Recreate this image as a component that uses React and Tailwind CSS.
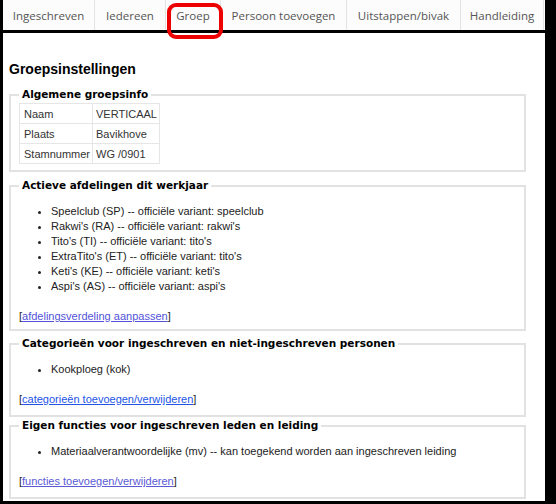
import { Fragment } from "react"

const TABS = [
    ["Ingeschreven", "w-[91px]"],
    ["Iedereen", "w-[70px]"],
    ["Groep", "w-[54px]"],
    ["Persoon toevoegen", "w-[125px]"],
    ["Uitstappen/bivak", "w-[113px]"],
    ["Handleiding", "w-[82px]"],
]

const INFO = [
    ["Naam", "VERTICAAL"],
    ["Plaats", "Bavikhove"],
    ["Stamnummer", "WG /0901"],
]

const AFDELINGEN = [
    "Speelclub (SP) -- officiële variant: speelclub",
    "Rakwi's (RA) -- officiële variant: rakwi's",
    "Tito's (TI) -- officiële variant: tito's",
    "ExtraTito's (ET) -- officiële variant: tito's",
    "Keti's (KE) -- officiële variant: keti's",
    "Aspi's (AS) -- officiële variant: aspi's",
]

function Box({ title, children, className = "" }) {
    return (
        <fieldset className={`border-2 border-[#e2e2e2] px-[8px] ${className}`}>
            <legend className="px-[3px] font-['DejaVu_Sans',sans-serif] font-bold text-[10.5px] leading-[13px] text-black">{title}</legend>
            {children}
        </fieldset>
    )
}

function EditLink({ label, color }) {
    return (
        <p className="leading-[14px]">
            [<a href="#" className={`underline ${color}`}>{label}</a>]
        </p>
    )
}

function Items({ items }) {
    return (
        <ul className="list-disc pl-[32px] mt-[12px] mb-[15px]">
            {items.map((item) => (
                <li key={item} className="leading-[15px]">{item}</li>
            ))}
        </ul>
    )
}

export default function App() {
    return (
        <div className="w-[556px] h-[504px] bg-black overflow-hidden">
            <div className="relative ml-[3px] w-[542px] h-[501px] bg-white">
                {/* tab bar */}
                <nav className="flex h-[33px] bg-[#fcfcfc] border-b-[3px] border-black font-['Open_Sans',sans-serif] text-[11.5px] text-[#555] whitespace-nowrap">
                    {TABS.map(([tab, w]) => (
                        <Fragment key={tab}>
                            <span className={`flex items-center justify-center pt-[1px] ${w}`}>{tab}</span>
                            <span className="w-px self-stretch bg-[#e3e3e3]"></span>
                        </Fragment>
                    ))}
                </nav>

                {/* highlight around the active tab */}
                <div className="absolute left-[164px] top-[3px] w-[56px] h-[36px] rounded-[9px] border-[4px] border-[#ee0000]"></div>

                <main className="pl-[6px] pr-[19px] font-['Liberation_Sans',sans-serif] text-[11px] text-[#222]">
                    <h1 className="mt-[28px] mb-[11px] text-[14px] leading-[16px] font-bold text-black">Groepsinstellingen</h1>

                    <Box title="Algemene groepsinfo" className="pb-[6px]">
                        <table className="mt-[2px] border-collapse text-[#333]">
                            <tbody>
                                {INFO.map(([k, v]) => (
                                    <tr key={k}>
                                        <td className="border border-[#e6e6e6] pl-[4px] pr-[2px] h-[20px] leading-[14px]">{k}</td>
                                        <td className="border border-[#e6e6e6] pl-[3px] pr-[2px] h-[20px] leading-[14px]">{v}</td>
                                    </tr>
                                ))}
                            </tbody>
                        </table>
                    </Box>

                    <Box title="Actieve afdelingen dit werkjaar" className="mt-[7px] pb-[6px]">
                        <Items items={AFDELINGEN} />
                        <EditLink label="afdelingsverdeling aanpassen" color="text-[#5252d8]" />
                    </Box>

                    <Box title="Categorieën voor ingeschreven en niet-ingeschreven personen" className="mt-[6px] pb-[9px]">
                        <Items items={["Kookploeg (kok)"]} />
                        <EditLink label="categorieën toevoegen/verwijderen" color="text-[#2255e6]" />
                    </Box>

                    <Box title="Eigen functies voor ingeschreven leden en leiding" className="mt-[2px] pb-[9px]">
                        <Items items={["Materiaalverantwoordelijke (mv) -- kan toegekend worden aan ingeschreven leiding"]} />
                        <EditLink label="functies toevoegen/verwijderen" color="text-[#5a5ad6]" />
                    </Box>
                </main>
            </div>
        </div>
    )
}
